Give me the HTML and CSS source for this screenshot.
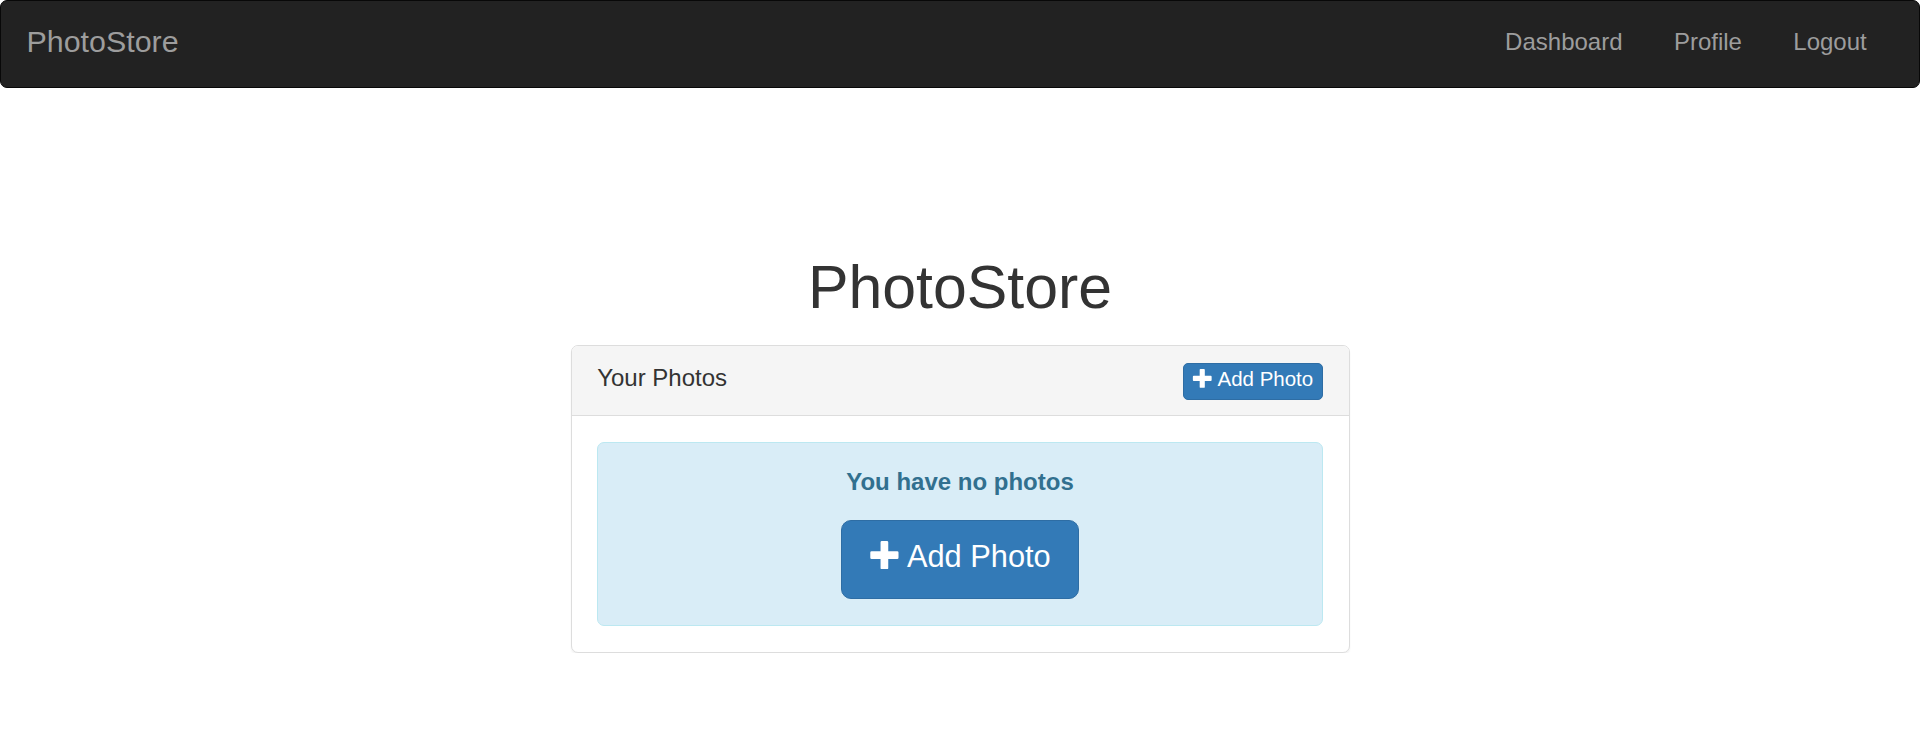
FILE: index.html
```html
<!DOCTYPE html>
<html lang="en">
<head>
<meta charset="utf-8">
<title>PhotoStore</title>
<link rel="stylesheet" href="styles.css">
</head>
<body>
<nav class="navbar">
  <a class="brand" href="#">PhotoStore</a>
  <ul class="nav-links">
    <li><a href="#">Dashboard</a></li>
    <li><a href="#">Profile</a></li>
    <li><a href="#">Logout</a></li>
  </ul>
</nav>
<main class="page">
  <h1 class="title">PhotoStore</h1>
  <section class="panel">
    <div class="panel-heading">
      <span class="panel-title">Your Photos</span>
      <button class="btn btn-xs" type="button"><svg class="icon-plus" viewBox="-50 0 1200 1100" aria-hidden="true"><path d="M450 0h200q50 0 50 50v350h350q50 0 50 50v200q0 50-50 50h-350v350q0 50-50 50h-200q-50 0-50-50v-350h-350q-50 0-50-50v-200q0-50 50-50h350v-350q0-50 50-50z"/></svg> Add Photo</button>
    </div>
    <div class="panel-body">
      <div class="alert">
        <p class="alert-text">You have no photos</p>
        <button class="btn btn-lg" type="button"><svg class="icon-plus" viewBox="-50 0 1200 1100" aria-hidden="true"><path d="M450 0h200q50 0 50 50v350h350q50 0 50 50v200q0 50-50 50h-350v350q0 50-50 50h-200q-50 0-50-50v-350h-350q-50 0-50-50v-200q0-50 50-50h350v-350q0-50 50-50z"/></svg> Add Photo</button>
      </div>
    </div>
  </section>
</main>
</body>
</html>
```
FILE: styles.css
```css
* {
  box-sizing: border-box;
}

html, body {
  margin: 0;
  padding: 0;
  background: #fff;
}

body {
  font-family: "Liberation Sans", Arial, Helvetica, sans-serif;
  font-size: 24px;
  line-height: 34px;
  color: #333;
}

/* Navbar */
.navbar {
  display: flex;
  justify-content: space-between;
  align-items: stretch;
  background: #222;
  border: 1px solid #080808;
  border-radius: 7px;
  height: 88px;
}

.brand {
  display: block;
  padding: 23px 25.5px 29px;
  font-size: 30.4px;
  line-height: 34px;
  color: #9d9d9d;
  text-decoration: none;
}

.nav-links {
  display: flex;
  list-style: none;
  margin: 0;
  padding: 0 26.6px 0 0;
}

.nav-links a {
  display: block;
  padding: 24px 25.7px 28px;
  font-size: 24px;
  line-height: 34px;
  color: #9d9d9d;
  text-decoration: none;
}

/* Page */
.page {
  padding-top: 165px;
}

.title {
  margin: 0 0 24px;
  text-align: center;
  font-size: 60.8px;
  line-height: 68px;
  font-weight: 400;
  color: #333;
}

/* Panel */
.panel {
  width: 779px;
  margin: 0 auto;
  border: 1px solid #ddd;
  border-radius: 7px;
  background: #fff;
  box-shadow: 0 2px 2px rgba(0, 0, 0, 0.05);
}

.panel-heading {
  display: flex;
  justify-content: space-between;
  align-items: flex-start;
  padding: 17px 25.7px;
  background: #f5f5f5;
  border-bottom: 1px solid #ddd;
  border-radius: 6px 6px 0 0;
}

.panel-title {
  font-size: 24px;
  line-height: 35px;
  margin: -3px 0 3px;
  color: #333;
}

.panel-body {
  padding: 25.7px;
}

.alert {
  background: #d9edf7;
  border: 1px solid #bce8f1;
  border-radius: 7px;
  color: #31708f;
  text-align: center;
  padding: 22px 25.7px 26px;
}

.alert-text {
  margin: 0 0 21.3px;
  font-size: 24px;
  line-height: 34px;
  font-weight: 700;
}

/* Buttons */
.btn {
  display: inline-block;
  font-family: "Liberation Sans", Arial, Helvetica, sans-serif;
  color: #fff;
  background: #337ab7;
  border: 1px solid #2e6da4;
  white-space: nowrap;
  cursor: pointer;
}

.btn-xs {
  font-size: 20.5px;
  line-height: 29px;
  padding: 0 8.6px 6px;
  border-radius: 5px;
  margin-bottom: -2px;
}

.btn-lg {
  font-size: 30.8px;
  line-height: 41px;
  padding: 15.5px 27.4px 20.5px;
  border-radius: 10px;
}

.icon-plus {
  width: 1em;
  height: 0.9167em;
  fill: #fff;
  vertical-align: -0.055em;
}

.btn-xs .icon-plus {
  vertical-align: -0.09em;
}
```
